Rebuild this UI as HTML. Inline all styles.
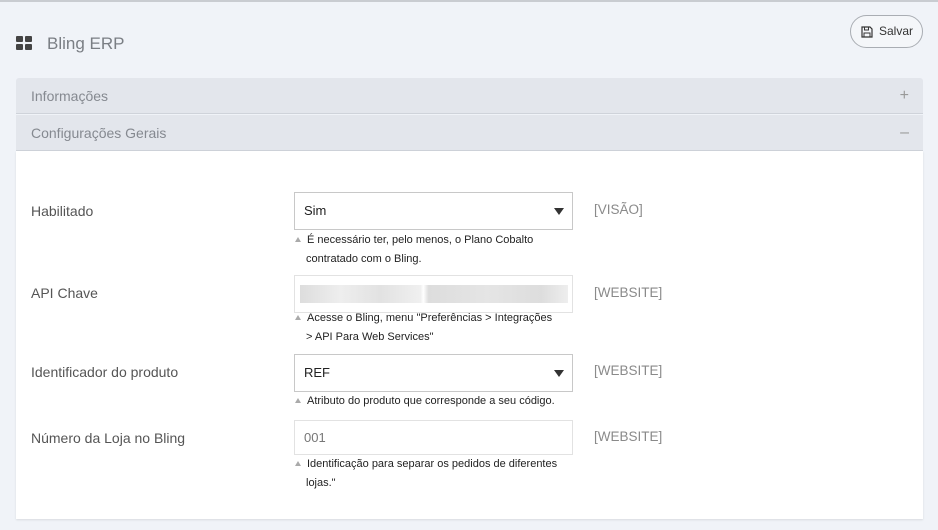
<!DOCTYPE html>
<html><head><style>
body{margin:0;width:938px;height:530px;background:#f0f3f8;font-family:"Liberation Sans",sans-serif;position:relative;overflow:hidden}
.a{position:absolute}
.title{left:47px;top:34px;font-size:17px;color:#7a7e84}
.hdr{left:16px;width:907px;height:36px;background:#e3e6ec;border-bottom:1px solid #cfd3da;border-radius:3px 3px 0 0;color:#858990;font-size:14px;line-height:36px;box-sizing:border-box;padding-left:15px}
.hdr span{position:absolute;right:14px;color:#999;font-size:16px}
.body{left:16px;top:151px;width:907px;height:368px;background:#fff;box-shadow:0 1px 2px rgba(0,0,0,.1)}
.lbl{left:31px;font-size:14px;color:#555}
.in{left:294px;width:279px;height:38px;border:1px solid #c8c8c8;box-sizing:border-box;font-size:13px;color:#222;line-height:36px;padding-left:9px}
.in.d{border-color:#e2e2e2;color:#777}
.arr{position:absolute;right:8px;top:15px;width:0;height:0;border-left:5px solid transparent;border-right:5px solid transparent;border-top:7px solid #333}
.hint{left:294px;width:280px;font-size:11px;color:#222;line-height:19px}
.hint:before{content:"";display:inline-block;width:0;height:0;border-left:3px solid transparent;border-right:3px solid transparent;border-bottom:5px solid #aaa;margin:0 6px 1px 1px}
.hint i{font-style:normal;padding-left:12px}
.sc{left:594px;font-size:13.5px;color:#8a8a8a}
.btn{left:850px;top:15px;width:73px;height:33px;border:1px solid #a9adb3;border-radius:17px;box-sizing:border-box;font-size:12px;color:#333;line-height:31px;background:#f4f6f9}
</style></head><body>
<div class="a" style="left:0;top:0;width:938px;height:2px;background:#c9ccd1"></div>
<div class="a" style="left:16px;top:36px;width:7px;height:6px;background:#444;border-radius:1px"></div>
<div class="a" style="left:25px;top:36px;width:7px;height:6px;background:#444;border-radius:1px"></div>
<div class="a" style="left:16px;top:44px;width:7px;height:6px;background:#444;border-radius:1px"></div>
<div class="a" style="left:25px;top:44px;width:7px;height:6px;background:#444;border-radius:1px"></div>
<div class="a title">Bling ERP</div>
<div class="a btn"><svg class="a" style="left:10px;top:10px" width="12" height="12" viewBox="0 0 12 12"><path d="M1 1h8l2 2v8H1z" fill="none" stroke="#333" stroke-width="1.2"/><rect x="3.5" y="1" width="4" height="3" fill="none" stroke="#333"/><rect x="3" y="7" width="6" height="4" fill="none" stroke="#333"/></svg><span class="a" style="left:28px">Salvar</span></div>
<div class="a hdr" style="top:78px">Informações<span>+</span></div>
<div class="a hdr" style="top:115px;border-radius:0">Configurações Gerais<span>–</span></div>
<div class="a body"></div>
<div class="a lbl" style="top:203px">Habilitado</div>
<div class="a in" style="top:192px">Sim<div class="arr"></div></div>
<div class="a hint" style="top:231px">É necessário ter, pelo menos, o Plano Cobalto<br><i>contratado com o Bling.</i></div>
<div class="a sc" style="top:202px">[VISÃO]</div>
<div class="a lbl" style="top:285px">API Chave</div>
<div class="a in d" style="top:275px"><div class="a" style="left:5px;top:9px;width:268px;height:18px;background:linear-gradient(90deg,#ddd 0,#eee 15%,#e2e2e2 30%,#f0f0f0 45%,#fff 46%,#ddd 48%,#e5e5e5 70%,#ddd 90%,#eee 100%)"></div></div>
<div class="a hint" style="top:309px">Acesse o Bling, menu "Preferências &gt; Integrações<br><i>&gt; API Para Web Services"</i></div>
<div class="a sc" style="top:285px">[WEBSITE]</div>
<div class="a lbl" style="top:364px">Identificador do produto</div>
<div class="a in" style="top:354px">REF<div class="arr"></div></div>
<div class="a hint" style="top:392px">Atributo do produto que corresponde a seu código.</div>
<div class="a sc" style="top:363px">[WEBSITE]</div>
<div class="a lbl" style="top:430px">Número da Loja no Bling</div>
<div class="a in d" style="top:420px;height:35px;line-height:33px">001</div>
<div class="a hint" style="top:455px">Identificação para separar os pedidos de diferentes<br><i>lojas."</i></div>
<div class="a sc" style="top:429px">[WEBSITE]</div>
</body></html>
